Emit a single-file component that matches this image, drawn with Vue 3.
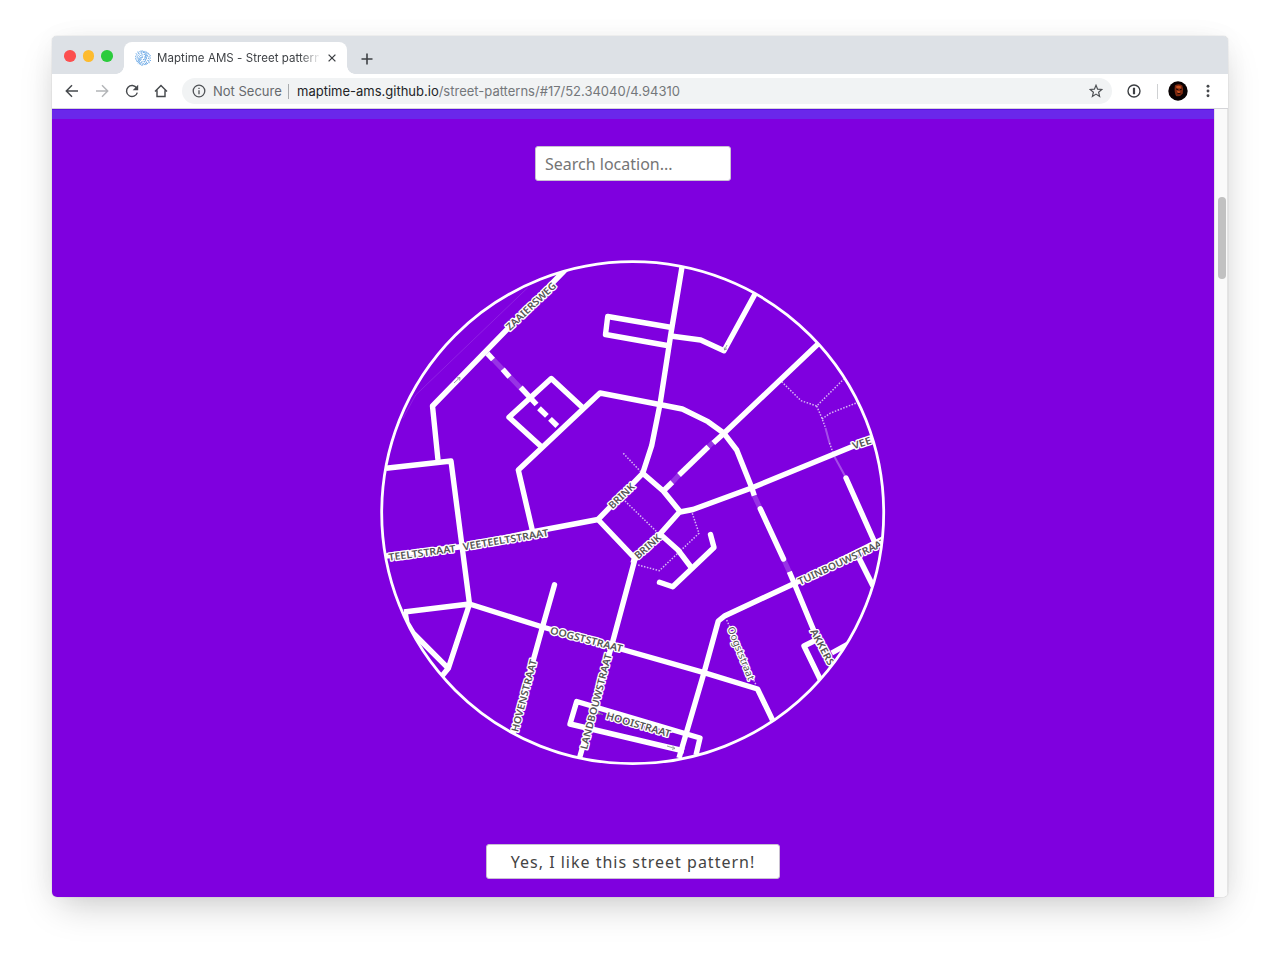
<script setup>
const roads = [
  'M566 269L432.5 406L438 460',
  'M386 468.3L451 461L462 546L469.5 604',
  'M582 407L551.3 378.5L509 417.3L541.7 447',
  'M532.5 531L518.3 470L600 393L659.5 404.5L682.3 409L708 421.7L724 433.3L736.7 450L751.5 487L754.3 495.7',
  'M682 267L670.7 335L660 404.3L651.7 445.7L642.7 473.3L598 519.5L634.5 558L633 563',
  'M642.7 473.3L663.3 491L680 511.5L660 534L634 560',
  'M671.7 327.5L607.7 316.5L605.5 334.5L670 346',
  'M670.7 336L700.7 340L724 350.7L755 294',
  'M818 344L724 433.3L713.3 443',
  'M708.3 446.7L679 475',
  'M672.3 482.3L663.3 491',
  'M680 512L693 509.5L751.5 488L872 438.5',
  'M885 538L794.3 583.5L725 615.7L718.3 621L704 672.7L679 758',
  'M859 558L873 586',
  'M789.3 571.7L794.3 583.5L814.3 631.7L831 664',
  'M816 640L804 646L820.5 680',
  'M831.7 653L848 644',
  'M469.5 604L542.5 627L612 646.5L704 672.7L757.5 689L772.5 720',
  'M404 612L469.5 604L448.3 668.3L442 676',
  'M405 612L407 623L413 633L448.3 668.3',
  'M386 556L463 546.5L532 532L598 519.5',
  'M635 559L612.3 643.3L579.5 758',
  'M684 751L570 724L576.7 701.5L700 738L696 755',
  'M660 534L678 550L692 568.5',
]
const roundRoads = [
  'M846 478L875 543',
  'M554.5 584.8L542.5 627L513 733',
  'M710.5 534.5L714 547.5L672.7 586.8L659.5 582.3',
  'M760.3 508.8L783.5 559',
]
const dashes = [
  'M487.3 353.3L493 359.5', 'M502.7 369.3L509.5 377', 'M520.7 387.3L536.5 404.5',
  'M539 408.3L546.9 415.9', 'M550 418.8L557.3 426',
]
const tunnels = [
  'M489 355L530 398', 'M713.3 442L708.3 446.7', 'M679 475L672.3 482.3',
  'M754.3 495.7L760.3 508.8', 'M783.5 559L789.3 571.7',
]
const paths = [
  'M781.7 381.7L801 400.7L816.7 406L843.5 379.3', 'M816.7 406L822 418.3L825.5 428',
  'M822 419L830 413.3L857 402.7', 'M829.5 443L834.5 456.7', 'M623.3 453.3L642 473',
  'M625 501L657 532', 'M692.3 513.3L699 533.3L659.3 570.7L638 565', 'M726.7 620L756 685',
]
const faint = ['M825.5 428L829.5 443', 'M834.5 456.7L845 476']

const labels = [
  ['ZAAIERSWEG', 507.5, 328.5, 554.5, 284],
  ['VEE', 852.5, 446.3, 871, 440],
  ['BRINK', 610, 507, 633, 485],
  ['BRINK', 636, 557, 659.5, 536],
  ['TEELTSTRAAT', 388.5, 557.3, 455.5, 548.5],
  ['VEETEELTSTRAAT', 463, 547, 548.3, 532.5],
  ['OOGSTSTRAAT', 550.5, 630, 622.5, 649],
  ['HOVENSTRAAT', 514.5, 731.5, 533.7, 659.5],
  ['LANDBOUWSTRAAT', 583.5, 749, 608.5, 654],
  ['HOOISTRAAT', 606.5, 715.5, 670.5, 734],
  ['TUINBOUWSTRAAT', 798.5, 582, 886, 541],
  ['AKKERS', 813, 629.5, 831.5, 664.5],
  ['Oogststraat', 730.5, 627, 751.5, 679.5],
].map(([text, x1, y1, x2, y2]) => ({
  text,
  length: Math.hypot(x2 - x1, y2 - y1),
  transform: `translate(${x1} ${y1}) rotate(${(Math.atan2(y2 - y1, x2 - x1) * 180) / Math.PI})`,
}))

// Short strokes scattered on a disc for the tab icon
const specks = []
for (let ring = 1; ring <= 4; ring++) {
  const count = ring * 6
  for (let i = 0; i < count; i++) {
    const a = (i / count) * Math.PI * 2 + ring * 0.4
    const x = 8 + Math.cos(a) * ring * 1.75
    const y = 8 + Math.sin(a) * ring * 1.75
    const t = a * 3.3 + ring
    specks.push(`M${x.toFixed(2)} ${y.toFixed(2)}l${(Math.cos(t) * 1.1).toFixed(2)} ${(Math.sin(t) * 1.1).toFixed(2)}`)
  }
}
const speckPath = specks.join('')
</script>

<template>
  <div class="desktop">
    <div class="window">
      <header class="tabstrip">
        <div class="lights"><i class="red"></i><i class="yellow"></i><i class="green"></i></div>
        <div class="tab">
          <svg class="favicon" viewBox="0 0 16 16"><path :d="speckPath" fill="none" stroke="#5b9fe3" stroke-width="0.85" stroke-linecap="round" /></svg>
          <span class="title">Maptime AMS - Street patterns</span>
          <svg class="close" viewBox="0 0 8 8"><path d="M.6 .6L7.4 7.4M7.4 .6L.6 7.4" /></svg>
        </div>
        <svg class="plus" viewBox="0 0 12 12"><path d="M6 .5V11.5M.5 6H11.5" /></svg>
      </header>
      <div class="toolbar">
        <nav class="nav">
          <svg viewBox="0 0 16 16"><path d="M14 8H2.5M8 2.3L2.3 8L8 13.7" /></svg>
          <svg class="dim" viewBox="0 0 16 16"><path d="M2 8H13.5M8 2.3L13.7 8L8 13.7" /></svg>
          <svg viewBox="0 0 16 16"><path d="M12.7 5.1A5.5 5.5 0 1 0 13.3 9.6" /><path class="solid" d="M14.2 1.7V7.2H8.7Z" /></svg>
          <svg viewBox="0 0 16 16"><path d="M2 8.5L8 2.6L14 8.5M4 7.2V13.5H12V7.2" /></svg>
        </nav>
        <div class="address">
          <svg class="info" viewBox="0 0 14 14"><circle cx="7" cy="7" r="5.8" /><path d="M7 6.2V10.2M7 3.8V5" /></svg>
          <span class="secure">Not Secure</span>
          <span class="rule"></span>
          <span class="url"><b>maptime-ams.github.io</b>/street-patterns/#17/52.34040/4.94310</span>
          <svg class="star" viewBox="0 0 14 14"><path d="M7 1.3L8.6 5.2L12.8 5.5L9.6 8.2L10.6 12.4L7 10.1L3.4 12.4L4.4 8.2L1.2 5.5L5.4 5.2Z" /></svg>
        </div>
        <svg class="onepass" viewBox="0 0 14 14"><circle cx="7" cy="7" r="6" /><path d="M7 3.7V10.3" /></svg>
        <span class="rule light"></span>
        <svg class="avatar" viewBox="0 0 20 20">
          <circle cx="10" cy="10" r="9.7" fill="#090203" />
          <path d="M7 4.2Q11 2.4 14.3 4.5Q15.8 8 14.8 12.5Q12 16.3 8 15Q5.8 10 7 4.2Z" fill="#7d2a12" />
          <path d="M8.2 5.3Q11 4 13 5.6L12.8 7.5L8.5 7.2ZM8.5 9.5L12.4 10.4L11 13.5Z" fill="#c9521f" />
          <path d="M8 8L10.2 8.6M12 8.7L13.8 8.2M9.5 12.6H12.5" stroke="#1d0705" stroke-width="1" />
        </svg>
        <svg class="kebab" viewBox="0 0 4 14"><circle cx="2" cy="2.2" r="1.45" /><circle cx="2" cy="7" r="1.45" /><circle cx="2" cy="11.8" r="1.45" /></svg>
      </div>
      <div class="content">
        <main class="page">
          <div class="band"></div>
          <input class="search" type="text" placeholder="Search location..." />
          <svg class="map" viewBox="380 260 506 506">
            <defs><clipPath id="disc"><circle cx="632.7" cy="512.7" r="251" /></clipPath></defs>
            <g clip-path="url(#disc)" class="lines">
              <path class="hair" d="M527.7 287.7L415.7 395L403 418" />
              <path v-for="d in tunnels" :key="d" :d="d" class="tunnel" />
              <path v-for="d in faint" :key="d" :d="d" class="faint" />
              <path v-for="d in paths" :key="d" :d="d" class="dotted" />
              <path v-for="d in roads" :key="d" :d="d" class="road" />
              <path v-for="d in dashes" :key="d" :d="d" class="road" />
              <path v-for="d in roundRoads" :key="d" :d="d" class="road round" />
              <path class="arrow" d="M454 383L460 377.5M457 378L460 377.5L459.7 380.5M727 345L724.5 350M724.3 347.5L724.5 350L727 348.8M603 714.5L598 713M600 712L598 713L599.5 715M667 746L675 748.5M672.5 746.2L675 748.5L672 749.3" />
              <text
                v-for="(l, i) in labels" :key="i" :transform="l.transform" y="3.5"
                :textLength="l.length" lengthAdjust="spacingAndGlyphs"
                :class="['label', { small: l.text === 'Oogststraat' }]"
              >{{ l.text }}</text>
            </g>
            <circle class="outline" cx="632.7" cy="512.7" r="251" />
          </svg>
          <button class="like">Yes, I like this street pattern!</button>
        </main>
        <aside class="scrollbar"><div class="thumb"></div></aside>
      </div>
    </div>
  </div>
</template>

<style>
body { background: #fff; }
</style>

<style scoped>
* { box-sizing: border-box; }
.desktop { height: 966px; padding: 36px 52px 0; overflow: hidden; }
.window {
  width: 1176px; height: 861px; border-radius: 5px; overflow: hidden;
  display: flex; flex-direction: column; background: #fff;
  font-family: Inter, "Liberation Sans", sans-serif;
  box-shadow: 0 0 1px rgba(0, 0, 0, .38), 0 14px 36px -8px rgba(0, 0, 0, .22), 0 0 28px rgba(0, 0, 0, .03);
}
.tabstrip { height: 38px; flex: none; background: #dde1e6; display: flex; align-items: flex-start; }
.lights { display: flex; gap: 7px; padding: 14px 0 0 12px; width: 72px; }
.lights i { width: 11.5px; height: 11.5px; border-radius: 50%; flex: none; }
.red { background: #fc4f4f; }
.yellow { background: #fdbb2e; }
.green { background: #2bcb3c; }
.tab {
  position: relative; width: 223px; height: 32px; margin-top: 6px; background: #fff;
  border-radius: 8px 8px 0 0; display: flex; align-items: center; padding-left: 11px;
}
.tab::before, .tab::after { content: ""; position: absolute; bottom: 0; width: 8px; height: 8px; }
.tab::before { left: -8px; background: radial-gradient(circle at 0 0, transparent 7.5px, #fff 8px); }
.tab::after { right: -8px; background: radial-gradient(circle at 100% 0, transparent 7.5px, #fff 8px); }
.favicon { width: 16px; height: 16px; }
.title {
  margin-left: 6px; width: 162px; overflow: hidden; white-space: nowrap; font-size: 11.5px; line-height: 18px; letter-spacing: .06px; color: #3f4246;
  mask-image: linear-gradient(90deg, #000 88%, transparent 101%);
}
.close { width: 8px; height: 8px; margin-left: 9px; fill: none; stroke: #3e4145; stroke-width: 1.3; }
.plus { width: 12px; height: 12px; margin: 17px 0 0 14px; fill: none; stroke: #3e4145; stroke-width: 1.6; }
.toolbar { height: 35px; flex: none; display: flex; align-items: center; border-bottom: 1px solid #d4d4d8; padding-left: 12px; }
.nav { display: flex; gap: 13.8px; width: 118px; }
.nav svg { width: 16px; height: 16px; flex: none; fill: none; stroke: #46494d; stroke-width: 1.45; }
.nav .dim { stroke: #b3b5b8; }
.nav .solid { fill: #46494d; stroke: none; }
.address { width: 930px; height: 26px; border-radius: 13px; background: #f1f3f4; display: flex; align-items: center; padding-left: 10px; font-size: 13px; white-space: nowrap; }
.info { width: 14px; height: 14px; fill: none; stroke: #505357; stroke-width: 1.3; }
.secure { width: 67px; margin-left: 7px; color: #66696d; font-size: 13px; }
.rule { width: 1px; height: 15px; background: #a8abae; margin-left: 8px; }
.url { width: 376px; margin-left: 8px; color: #74777b; font-size: 13px; }
.url b { font-weight: 400; color: #222427; }
.star { width: 14px; height: 14px; margin-left: 416px; fill: none; stroke: #4e5155; stroke-width: 1.2; }
.onepass { width: 14px; height: 14px; margin-left: 15px; fill: none; stroke: #3c3f43; stroke-width: 1.4; }
.onepass path { stroke-width: 2.2; }
.rule.light { background: #cfd1d3; margin-left: 16px; }
.avatar { width: 20px; height: 20px; margin-left: 10px; }
.kebab { width: 4px; height: 14px; margin-left: 18px; fill: #45484c; }
.content { flex: 1; display: flex; min-height: 0; }
.page { width: 1162px; background: #7f00df; display: flex; flex-direction: column; align-items: center; }
.band { width: 100%; height: 10px; background: #6a27ea; border-top: 1px solid #5a0fe2; flex: none; }
.search {
  width: 196px; height: 35px; margin-top: 27px; border: 1px solid #c9bfd2; border-radius: 3px; background: #fff;
  padding: 0 9px; font: 16px "Noto Sans", sans-serif; outline: none;
}
.search::placeholder { color: #757575; opacity: 1; }
.map { width: 506px; height: 506px; margin-top: 79px; flex: none; position: relative; }
.lines path { fill: none; stroke: #fff; }
.lines .road { stroke-width: 5.4; stroke-linejoin: round; }
.lines .round { stroke-linecap: round; }
.lines .tunnel { stroke-width: 5; opacity: .2; }
.lines .faint { stroke-width: 2; opacity: .3; }
.lines .hair { stroke-width: 1; opacity: .12; }
.lines .dotted { stroke-width: 1.5; stroke-dasharray: 1.5 1.5; opacity: .7; }
.lines .arrow { stroke: #8b9a96; stroke-width: .9; }
.outline { fill: none; stroke: #fff; stroke-width: 2.8; }
.label { font: 600 10px "Noto Sans", sans-serif; fill: #555; stroke: #fff; stroke-width: 2.6px; stroke-linejoin: round; paint-order: stroke; }
.label.small { font-weight: 400; }
.like {
  width: 294px; height: 35px; margin-top: 78px; border: 1px solid #c9bfd2; border-radius: 3px; background: #fff;
  color: #444; font: 16px "Noto Sans", sans-serif; letter-spacing: 1px; padding: 0; white-space: nowrap;
}
.scrollbar { width: 14px; background: #fafafa; border-left: 1px solid #e6e0ea; border-right: 1px solid #e4e4e4; padding: 88px 0 0 3px; }
.thumb { width: 8px; height: 82px; border-radius: 4px; background: #c1c1c1; }
</style>
